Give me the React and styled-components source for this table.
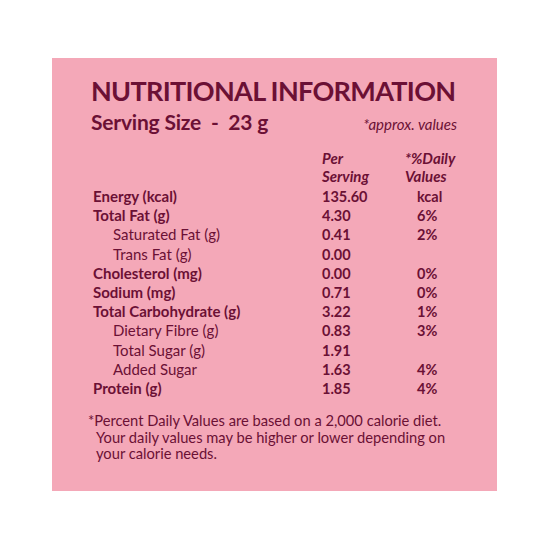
import React from "react";
import styled, { createGlobalStyle } from "styled-components";

const Global = createGlobalStyle`
  html, body { margin: 0; padding: 0; background: #ffffff; }
  body { font-family: "Lato", "Open Sans", sans-serif; }
`;

const Page = styled.div`
  width: 550px;
  height: 550px;
  padding: 58px 0 0 52px;
  box-sizing: border-box;
`;

const Card = styled.div`
  width: 445px;
  height: 433px;
  box-sizing: border-box;
  background: #f4a8b8;
  color: #6b1035;
  padding: 16px 30px 0 39px;
`;

const Title = styled.h1`
  margin: 0;
  font-size: 27px;
  line-height: 34px;
  font-weight: 700;
  letter-spacing: -0.68px;
  white-space: nowrap;
`;

const ServingRow = styled.div`
  display: flex;
  align-items: baseline;
  justify-content: space-between;
  margin-top: 1px;
`;

const Serving = styled.div`
  font-size: 21px;
  font-weight: 700;
  letter-spacing: -0.2px;
`;

const Approx = styled.div`
  font-size: 15px;
  font-style: italic;
  font-weight: 400;
  margin-right: 10px;
`;

const Table = styled.div`
  display: grid;
  grid-template-columns: 229px 83px 1fr;
  margin-top: 15px;
  padding-left: 2px;
`;

const Head = styled.div`
  font-size: 15px;
  font-style: italic;
  font-weight: 700;
  line-height: 18px;
  margin-bottom: 2px;
`;

const Label = styled.div`
  font-size: 15px;
  line-height: 19.2px;
  font-weight: ${(p) => (p.$sub ? 400 : 700)};
  padding-left: ${(p) => (p.$sub ? "20px" : "0")};
  white-space: nowrap;
`;

const Value = styled.div`
  font-size: 14.5px;
  line-height: 19.2px;
  font-weight: 700;
  padding-left: ${(p) => (p.$dv ? "12px" : "0")};
`;

const Foot = styled.p`
  margin: 14px 0 0;
  font-size: 14.7px;
  line-height: 16.5px;
  padding-left: 8px;
  text-indent: -8px;
  margin-left: -3px;
`;

const rows = [
  ["Energy (kcal)", "135.60", "kcal"],
  ["Total Fat (g)", "4.30", "6%"],
  ["Saturated Fat (g)", "0.41", "2%", true],
  ["Trans Fat (g)", "0.00", "", true],
  ["Cholesterol (mg)", "0.00", "0%"],
  ["Sodium (mg)", "0.71", "0%"],
  ["Total Carbohydrate (g)", "3.22", "1%"],
  ["Dietary Fibre (g)", "0.83", "3%", true],
  ["Total Sugar (g)", "1.91", "", true],
  ["Added Sugar", "1.63", "4%", true],
  ["Protein (g)", "1.85", "4%"],
];

export default function App() {
  return (
    <>
      <Global />
      <Page>
        <Card>
          <Title>NUTRITIONAL INFORMATION</Title>
          <ServingRow>
            <Serving>Serving Size&nbsp; -&nbsp; 23 g</Serving>
            <Approx>*approx. values</Approx>
          </ServingRow>
          <Table>
            <div />
            <Head>Per<br />Serving</Head>
            <Head>*%Daily<br />Values</Head>
            {rows.map(([l, v, d, sub]) => (
              <React.Fragment key={l}>
                <Label $sub={sub}>{l}</Label>
                <Value>{v}</Value>
                <Value $dv>{d}</Value>
              </React.Fragment>
            ))}
          </Table>
          <Foot>
            *Percent Daily Values are based on a 2,000 calorie diet. Your daily
            values may be higher or lower depending on your calorie needs.
          </Foot>
        </Card>
      </Page>
    </>
  );
}
